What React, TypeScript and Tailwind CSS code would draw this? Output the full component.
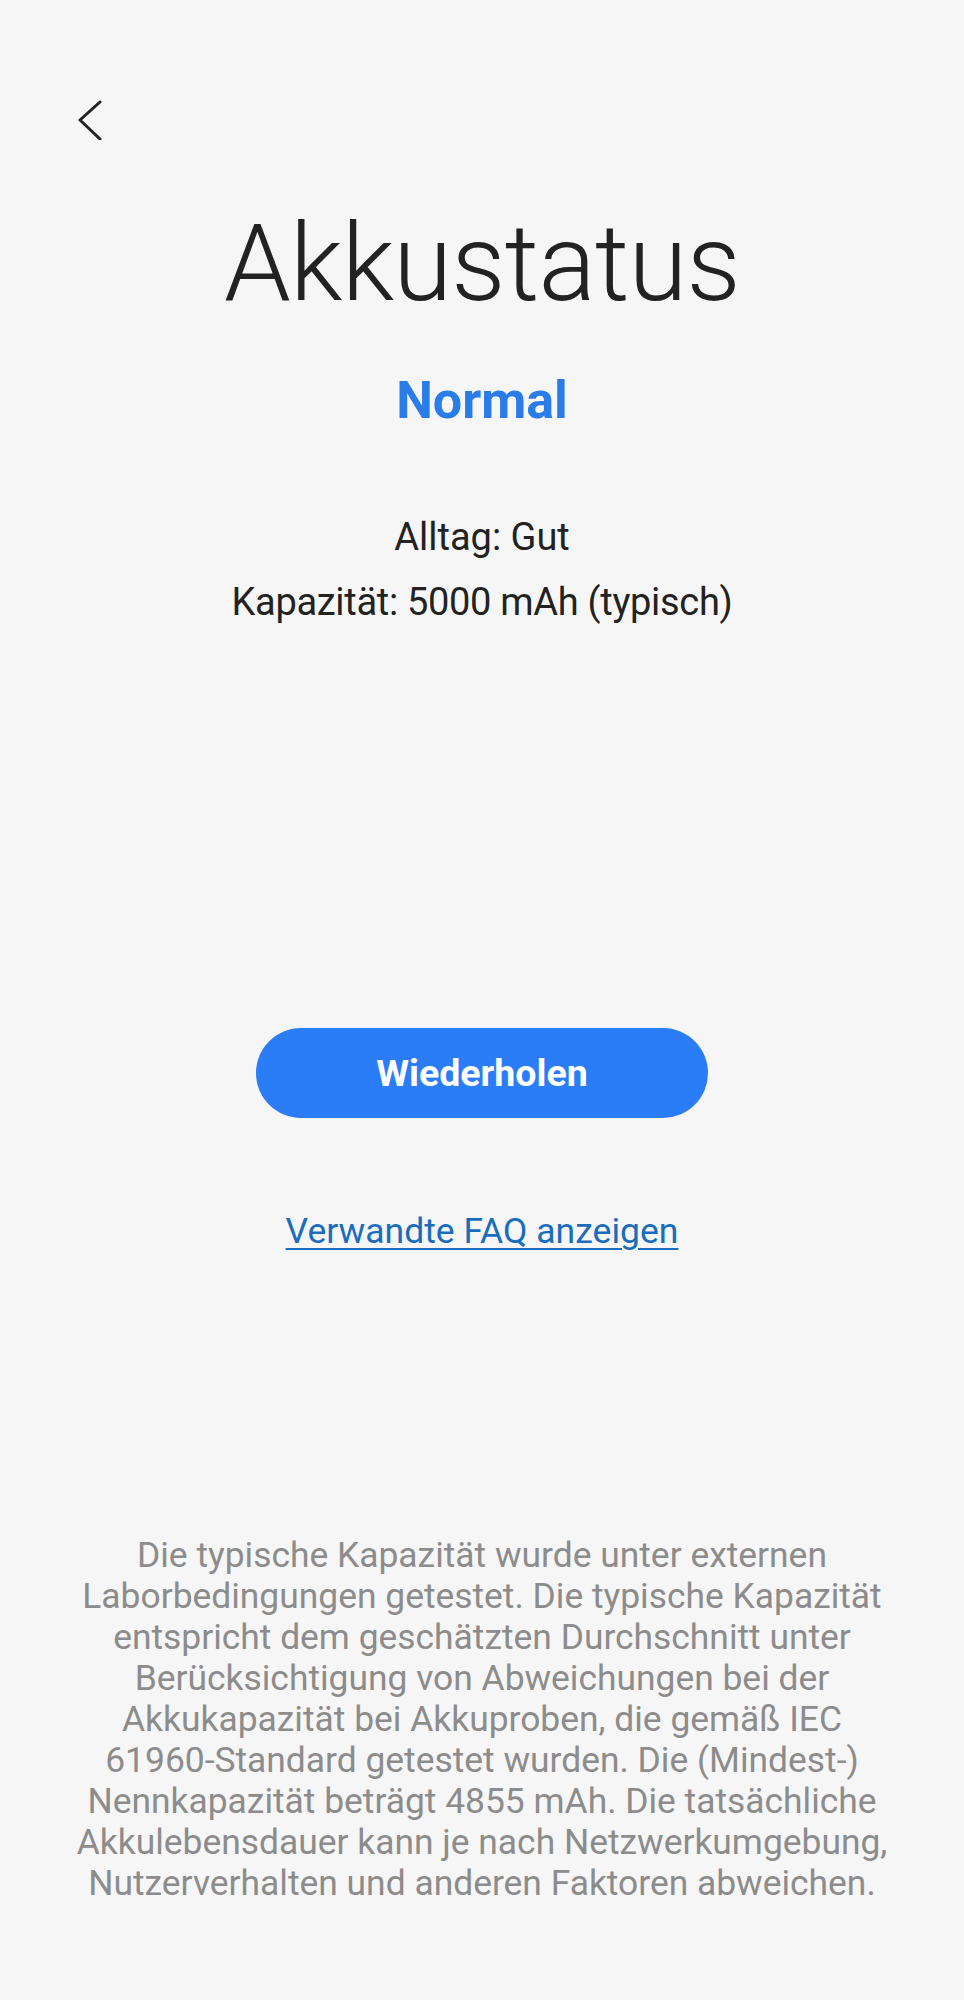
import { useState } from "react";

const disclaimer = [
  "Die typische Kapazität wurde unter externen",
  "Laborbedingungen getestet. Die typische Kapazität",
  "entspricht dem geschätzten Durchschnitt unter",
  "Berücksichtigung von Abweichungen bei der",
  "Akkukapazität bei Akkuproben, die gemäß IEC",
  "61960-Standard getestet wurden. Die (Mindest-)",
  "Nennkapazität beträgt 4855 mAh. Die tatsächliche",
  "Akkulebensdauer kann je nach Netzwerkumgebung,",
  "Nutzerverhalten und anderen Faktoren abweichen.",
];

function BackButton() {
  return (
    <button type="button" className="block" aria-label="Zurück">
      <svg width="24" height="40" viewBox="0 0 24 40" fill="none">
        <polyline
          points="22,2 2,20 22,39"
          stroke="#222222"
          strokeWidth="3"
          strokeLinecap="round"
          strokeLinejoin="round"
        />
      </svg>
    </button>
  );
}

export default function App() {
  const [runs, setRuns] = useState(0);

  return (
    <div
      className="min-h-[2000px] w-full bg-[#f6f6f6] text-[#222222]"
      style={{ fontFamily: "Roboto, 'Noto Sans', sans-serif" }}
    >
      <div className="pl-[78px] pt-[100px]">
        <BackButton />
      </div>

      <div className="flex flex-col items-center">
        <h1 className="mt-[64px] text-[107px] font-light leading-[120px] tracking-[-0.8px]">Akkustatus</h1>
        <p className="mt-[47px] text-[52px] font-bold leading-[60px] text-[#2a7ce9]">Normal</p>

        <p className="mt-[83px] text-[38px] leading-[46px]">Alltag: Gut</p>
        <p className="mt-[19px] text-[38px] leading-[46px] tracking-[-0.3px]">Kapazität: 5000 mAh (typisch)</p>

        <button
          type="button"
          onClick={() => setRuns(runs + 1)}
          className="mt-[403px] h-[90px] w-[452px] rounded-full bg-[#2a7cf7] text-[37.5px] font-bold text-white"
        >
          Wiederholen
        </button>

        <a
          href="#"
          className="mt-[93px] text-[35.5px] leading-[40px] text-[#1a6dbe] underline decoration-2 underline-offset-[5px]"
        >
          Verwandte FAQ anzeigen
        </a>

        <p className="mt-[284px] text-center text-[35.4px] leading-[41px] text-[#8c8c8c]">
          {disclaimer.map((line, i) => (
            <span key={i} className="block whitespace-nowrap">
              {line}
            </span>
          ))}
        </p>
      </div>
    </div>
  );
}
